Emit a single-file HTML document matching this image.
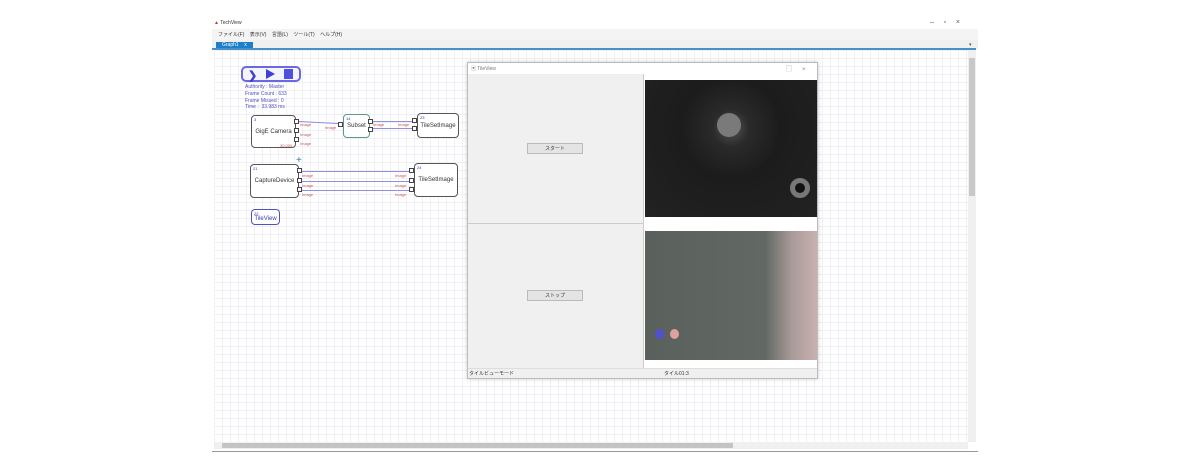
<!DOCTYPE html><html><head><meta charset="utf-8"><style>
*{margin:0;padding:0;box-sizing:border-box}
body{width:1200px;height:472px;background:#fff;position:relative;overflow:hidden;font-family:"Liberation Sans","Noto Sans CJK JP",sans-serif;}
.a{position:absolute}
.t{font-size:5px;white-space:nowrap}
.grid{background-color:#fff;background-image:linear-gradient(#f0f0f4 1px,transparent 1px),linear-gradient(90deg,#f0f0f4 1px,transparent 1px);background-size:8px 8px}
.node{position:absolute;border:1.5px solid #555;border-radius:4px;background:#fff;font-size:6px;color:#333;display:flex;align-items:center;justify-content:center}
.port{position:absolute;width:5px;height:5px;border:1px solid #444;background:#fff}
.lbl{position:absolute;font-size:4px;color:#c55}
.num{position:absolute;font-size:4px;color:#33a;left:2px;top:1px}
.ln{position:absolute;height:1px;background:#8f8fe0}
</style></head><body>
<div class="a" style="left:212px;top:18px;width:766px;height:434px;background:#fff;border-bottom:1px solid #999"></div>
<div class="a t" style="left:214px;top:20px;font-size:5px;color:#333"><span style="color:#c33">▲</span> TechView</div>
<div class="a t" style="left:930px;top:19px;font-size:7px;color:#555">–&nbsp;&nbsp;&nbsp;&nbsp;&nbsp;▫&nbsp;&nbsp;&nbsp;&nbsp;&nbsp;×</div>
<div class="a" style="left:212px;top:29px;width:766px;height:11px;background:#f4f4f4"></div>
<div class="a t" style="left:218px;top:31px;color:#333;word-spacing:4px">ファイル(F) 表示(V) 言語(L) ツール(T) ヘルプ(H)</div>
<div class="a" style="left:212px;top:40px;width:766px;height:9px;background:#f0f0f0"></div>
<div class="a t" style="left:216px;top:42px;width:37px;height:7px;background:#1e7ec8;color:#fff;padding-left:6px">Graph1 &nbsp;&nbsp;&nbsp;x</div>
<div class="a" style="left:212px;top:48px;width:764px;height:2px;background:#4a90c8"></div>
<div class="a t" style="left:969px;top:42px;color:#555">▾</div>
<div class="a grid" style="left:214px;top:50px;width:754px;height:392px"></div>
<div class="a" style="left:968px;top:50px;width:8px;height:392px;background:#f0f0f0"></div>
<div class="a" style="left:969px;top:58px;width:6px;height:138px;background:#c8c8c8"></div>
<div class="a" style="left:214px;top:442px;width:754px;height:7px;background:#f0f0f0"></div>
<div class="a" style="left:222px;top:443px;width:511px;height:5px;background:#c4c4c4"></div>
<div class="a" style="left:241px;top:66px;width:60px;height:16px;border:2px solid #6a6ae0;border-radius:5px;background:#f4f4ff"></div>
<div class="a" style="left:248px;top:69px;font-size:11px;color:#4040d0;font-weight:bold">❯</div>
<div class="a" style="left:266px;top:69px;width:0;height:0;border-left:9px solid #4040d0;border-top:5px solid transparent;border-bottom:5px solid transparent"></div>
<div class="a" style="left:284px;top:69px;width:9px;height:10px;background:#5050e0"></div>
<div class="a" style="left:245px;top:84px;font-size:5px;line-height:6.8px;color:#5050c0">Authority : Master<br>Frame Count : 633<br>Frame Missed : 0<br>Time : &nbsp;33.983 ms</div>
<div class="ln" style="left:299px;top:121px;width:45px;transform:rotate(3deg);transform-origin:left"></div>
<div class="ln" style="left:371px;top:121px;width:44px"></div>
<div class="ln" style="left:371px;top:128px;width:44px"></div>
<div class="ln" style="left:302px;top:171px;width:110px"></div>
<div class="ln" style="left:302px;top:181px;width:110px"></div>
<div class="ln" style="left:302px;top:190px;width:110px"></div>
<div class="node" style="left:251px;top:115px;width:45px;height:33px">GigE Camera<span class="num">3</span></div>
<div class="port" style="left:294px;top:119px"></div><div class="port" style="left:294px;top:128px"></div><div class="port" style="left:294px;top:137px"></div>
<div class="lbl" style="left:300px;top:122px">Image</div><div class="lbl" style="left:300px;top:132px">Image</div><div class="lbl" style="left:300px;top:141px">Image</div><div class="lbl" style="left:280px;top:143px">30.000</div>
<div class="node" style="left:343px;top:114px;width:27px;height:24px;border-color:#5a9a8a">Subset<span class="num">14</span></div>
<div class="port" style="left:338px;top:122px"></div><div class="port" style="left:368px;top:119px"></div><div class="port" style="left:368px;top:127px"></div>
<div class="lbl" style="left:325px;top:125px">Image</div><div class="lbl" style="left:373px;top:122px">Image</div>
<div class="node" style="left:417px;top:113px;width:42px;height:25px">TileSetImage<span class="num">23</span></div>
<div class="port" style="left:412px;top:118px"></div><div class="port" style="left:412px;top:126px"></div>
<div class="lbl" style="left:398px;top:122px">Image</div>
<div class="node" style="left:250px;top:164px;width:49px;height:34px">CaptureDevice<span class="num">21</span></div>
<div class="port" style="left:297px;top:168px"></div><div class="port" style="left:297px;top:178px"></div><div class="port" style="left:297px;top:187px"></div>
<div class="lbl" style="left:302px;top:173px">Image</div><div class="lbl" style="left:302px;top:183px">Image</div><div class="lbl" style="left:302px;top:192px">Image</div>
<div class="a" style="left:296px;top:155px;font-size:10px;color:#3a7ab0">+</div>
<div class="node" style="left:414px;top:163px;width:44px;height:34px">TileSetImage<span class="num">24</span></div>
<div class="port" style="left:409px;top:168px"></div><div class="port" style="left:409px;top:178px"></div><div class="port" style="left:409px;top:187px"></div>
<div class="lbl" style="left:395px;top:173px">Image</div><div class="lbl" style="left:395px;top:183px">Image</div><div class="lbl" style="left:395px;top:192px">Image</div>
<div class="node" style="left:251px;top:209px;width:29px;height:16px;border-color:#5050c0;color:#3a3ab0;padding-top:4px">TileView<span class="num">22</span></div>
<div class="a" style="left:467px;top:62px;width:351px;height:317px;background:#f0f0f0;border:1px solid #bbb;box-shadow:0 0 4px rgba(0,0,0,.2)"></div>
<div class="a" style="left:468px;top:63px;width:349px;height:11px;background:#fff"></div>
<div class="a t" style="left:471px;top:65px;color:#777">▣ TileView</div>
<div class="a t" style="left:786px;top:64px;font-size:6px;color:#888">▢&nbsp;&nbsp;&nbsp;&nbsp;&nbsp;&nbsp;×</div>
<div class="a" style="left:468px;top:223px;width:175px;height:1px;background:#ccc"></div>
<div class="a" style="left:643px;top:74px;width:1px;height:294px;background:#ccc"></div>
<div class="a t" style="left:527px;top:143px;width:56px;height:11px;border:1px solid #bbb;background:#e4e4e4;text-align:center;line-height:10px;color:#333">スタート</div>
<div class="a t" style="left:527px;top:290px;width:56px;height:11px;border:1px solid #bbb;background:#e4e4e4;text-align:center;line-height:10px;color:#333">ストップ</div>
<div class="a" style="left:644px;top:74px;width:173px;height:294px;background:#fff"></div>
<div class="a" style="left:645px;top:80px;width:172px;height:137px;background:radial-gradient(circle at 50% 35%,#555 0,#2a2a2a 15%,#1c1c1c 40%,#222 100%)"></div>
<div class="a" style="left:717px;top:113px;width:24px;height:24px;border-radius:50%;background:#7a7a7a"></div>
<div class="a" style="left:790px;top:178px;width:20px;height:20px;border-radius:50%;border:5px solid #777;background:#111"></div>
<div class="a" style="left:645px;top:231px;width:172px;height:129px;background:linear-gradient(90deg,#5a605c 0,#626864 70%,#a89a98 85%,#c8b0b0 100%)"></div>
<div class="a" style="left:655px;top:329px;width:9px;height:10px;border-radius:50%;background:#5050d0"></div>
<div class="a" style="left:670px;top:329px;width:9px;height:10px;border-radius:50%;background:#e0a0a0"></div>
<div class="a" style="left:468px;top:368px;width:349px;height:10px;background:#f0f0f0;border-top:1px solid #ddd"></div>
<div class="a t" style="left:469px;top:370px;color:#333">タイルビューモード</div>
<div class="a t" style="left:664px;top:370px;color:#333">タイル01:3</div>
</body></html>
